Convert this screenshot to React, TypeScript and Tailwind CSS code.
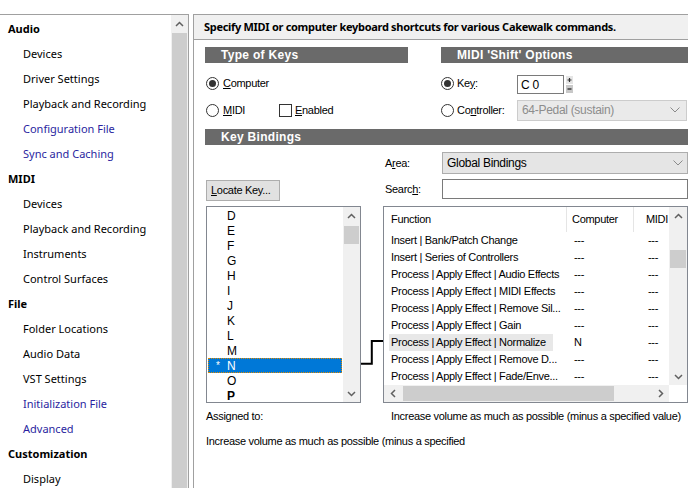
import React from "react";

const sideItems: [string, string?][] = [
  ["Audio", "h"],
  ["Devices"],
  ["Driver Settings"],
  ["Playback and Recording"],
  ["Configuration File", "b"],
  ["Sync and Caching", "b"],
  ["MIDI", "h"],
  ["Devices"],
  ["Playback and Recording"],
  ["Instruments"],
  ["Control Surfaces"],
  ["File", "h"],
  ["Folder Locations"],
  ["Audio Data"],
  ["VST Settings"],
  ["Initialization File", "b"],
  ["Advanced", "b"],
  ["Customization", "h"],
  ["Display"],
];

const keys = ["D", "E", "F", "G", "H", "I", "J", "K", "L", "M", "N", "O", "P"];

const funcs: [string, string][] = [
  ["Insert | Bank/Patch Change", "---"],
  ["Insert | Series of Controllers", "---"],
  ["Process | Apply Effect | Audio Effects", "---"],
  ["Process | Apply Effect | MIDI Effects", "---"],
  ["Process | Apply Effect | Remove Sil...", "---"],
  ["Process | Apply Effect | Gain", "---"],
  ["Process | Apply Effect | Normalize", "N"],
  ["Process | Apply Effect | Remove D...", "---"],
  ["Process | Apply Effect | Fade/Enve...", "---"],
];

function Up() {
  return (
    <svg width="9" height="6" viewBox="0 0 9 6">
      <polyline points="1,5 4.5,1.5 8,5" fill="none" stroke="#606060" strokeWidth="1.5" />
    </svg>
  );
}
function Down() {
  return (
    <svg width="9" height="6" viewBox="0 0 9 6">
      <polyline points="1,1 4.5,4.5 8,1" fill="none" stroke="#606060" strokeWidth="1.5" />
    </svg>
  );
}
function Left() {
  return (
    <svg width="6" height="9" viewBox="0 0 6 9">
      <polyline points="5,1 1.5,4.5 5,8" fill="none" stroke="#606060" strokeWidth="1.5" />
    </svg>
  );
}
function Right() {
  return (
    <svg width="6" height="9" viewBox="0 0 6 9">
      <polyline points="1,1 4.5,4.5 1,8" fill="none" stroke="#606060" strokeWidth="1.5" />
    </svg>
  );
}
function SelChevron() {
  return (
    <svg width="10" height="6" viewBox="0 0 10 6">
      <polyline points="0.5,0.5 5,5 9.5,0.5" fill="none" stroke="#8a8a8a" strokeWidth="1" />
    </svg>
  );
}

function Radio({ on }: { on?: boolean }) {
  return (
    <div className="w-[13px] h-[13px] rounded-full border border-[#333333] bg-white flex items-center justify-center shrink-0">
      {on && <div className="w-[7px] h-[7px] rounded-full bg-[#333333]" />}
    </div>
  );
}

function Bar({ children }: { children: React.ReactNode }) {
  return (
    <div className="h-[16px] bg-[#6a6a6a] flex items-center pl-[16px] text-[12px] font-bold text-white tracking-[0.3px] font-['Liberation_Sans',sans-serif]">
      {children}
    </div>
  );
}

export default function App() {
  return (
    <div className="w-[688px] h-[488px] overflow-hidden bg-white relative font-['Liberation_Sans',sans-serif] text-black">
      {/* title (cut off) */}
      <div className="h-[14px] overflow-hidden">
        <div className="mt-[-11px] ml-[3px] text-[12px] leading-[13px] font-['Noto_Sans',sans-serif] text-[#222]">Preferences</div>
      </div>
      <div className="flex h-[474px]">
        {/* sidebar */}
        <div className="w-[189px] border-t border-r border-[#a0a0a0] flex">
          <div className="flex-1 pt-[2px] font-['Noto_Sans',sans-serif] text-[11px]">
            {sideItems.map(([t, k], i) => (
              <div
                key={i}
                className={
                  "h-[25px] flex items-center whitespace-nowrap " +
                  (k === "h" ? "pl-[8px] font-bold text-black" : k === "b" ? "pl-[23px] text-[#2a1fa0]" : "pl-[23px] text-black")
                }
              >
                {t}
              </div>
            ))}
          </div>
          <div className="w-[17px] bg-[#f0f0f0] flex flex-col">
            <div className="h-[18px] flex items-center justify-center">
              <Up />
            </div>
            <div className="flex-1 mx-[1px] bg-[#cdcdcd]" />
          </div>
        </div>
        <div className="w-[4px]" />
        {/* right panel */}
        <div className="flex-1 border-t border-l border-[#a0a0a0] flex flex-col">
          <div className="h-[25px] shrink-0 bg-[#f0f0f0] border-b border-[#a0a0a0] flex items-center pl-[10px] font-['Noto_Sans',sans-serif] text-[11px] tracking-[-0.3px] font-bold whitespace-nowrap">
            Specify MIDI or computer keyboard shortcuts for various Cakewalk commands.
          </div>
          <div className="pl-[11px] text-[11px] tracking-[-0.3px]">
            {/* Top two groups */}
            <div className="flex mt-[7px]">
              <div className="w-[203px]">
                <Bar>Type of Keys</Bar>
                <div className="mt-[10px] h-[20px] flex items-center pl-[1px]">
                  <Radio on />
                  <span className="ml-[4px]">
                    <u>C</u>omputer
                  </span>
                </div>
                <div className="mt-[7px] h-[20px] flex items-center pl-[1px]">
                  <Radio />
                  <span className="ml-[4px] w-[56px]">
                    <u>M</u>IDI
                  </span>
                  <div className="w-[13px] h-[13px] border border-[#333333] bg-white" />
                  <span className="ml-[3px]">
                    <u>E</u>nabled
                  </span>
                </div>
              </div>
              <div className="ml-[33px] flex-1">
                <Bar>MIDI 'Shift' Options</Bar>
                <div className="mt-[10px] h-[20px] flex items-center">
                  <Radio on />
                  <span className="ml-[3px] w-[60px]">
                    Ke<u>y</u>:
                  </span>
                  <div className="mt-[3px] w-[47px] h-[19px] border border-[#7a7a7a] bg-white flex items-center pl-[3px] text-[12px]">
                    C 0
                  </div>
                  <svg width="8" height="17" viewBox="0 0 8 17" className="ml-[2px] mt-[3px]">
                    <rect x="0" y="0" width="7" height="8" fill="#e5e5e5" />
                    <rect x="0" y="9" width="7" height="8" fill="#c8c8c8" />
                    <path d="M1.5 4h4M3.5 2v4" stroke="#333" strokeWidth="1.2" />
                    <path d="M1.5 13h4" stroke="#333" strokeWidth="1.4" />
                  </svg>
                </div>
                <div className="mt-[7px] h-[20px] flex items-center">
                  <Radio />
                  <span className="ml-[3px] w-[60px]">
                    Co<u>n</u>troller:
                  </span>
                  <div className="w-[170px] h-[21px] border border-[#cccccc] bg-[#eaeaea] flex items-center justify-between pl-[4px] pr-[6px] text-[#8d8d8d] text-[12px]">
                    <span>64-Pedal (sustain)</span>
                    <SelChevron />
                  </div>
                </div>
              </div>
            </div>
            {/* Key Bindings */}
            <div className="mt-[9px]">
              <Bar>Key Bindings</Bar>
            </div>
            <div className="flex">
              {/* left col */}
              <div className="ml-[1px] w-[155px] shrink-0">
                <div className="mt-[35px] w-[74px] h-[21px] bg-[#e1e1e1] border border-[#adadad] flex items-center pl-[4px] whitespace-nowrap">
                  <u>L</u>ocate Key...
                </div>
                <div className="mt-[5px] h-[197px] border border-[#828790] flex overflow-hidden">
                  <div className="flex-1 px-[1px] pt-[1px] overflow-hidden text-[12px] tracking-normal">
                    {keys.map((k) =>
                      k === "N" ? (
                        <div
                          key={k}
                          className="h-[15px] bg-[#0078d7] text-white border border-dotted border-[#e08a00] flex items-center"
                        >
                          <span className="w-[18px] pl-[7px] text-[10px]">*</span>
                          <span>N</span>
                        </div>
                      ) : (
                        <div key={k} className={"h-[15px] flex items-center pl-[19px] " + (k === "P" ? "font-bold" : "")}>
                          {k}
                        </div>
                      )
                    )}
                  </div>
                  <div className="w-[17px] bg-[#f0f0f0] flex flex-col">
                    <div className="h-[17px] flex items-center justify-center">
                      <Up />
                    </div>
                    <div className="h-[18px] mx-[1px] mt-[2px] bg-[#cdcdcd]" />
                    <div className="flex-1" />
                    <div className="h-[17px] flex items-center justify-center">
                      <Down />
                    </div>
                  </div>
                </div>
                <div className="mt-[6px] h-[14px] flex items-center whitespace-nowrap">Assigned to:</div>
              </div>
              {/* connector */}
              <div className="w-[22px] shrink-0">
                <svg width="22" height="30" viewBox="0 0 22 30" className="mt-[194px]">
                  <path d="M0 24.7H10.8V2H22" fill="none" stroke="#000" strokeWidth="2" />
                </svg>
              </div>
              {/* right col */}
              <div className="w-[305px] shrink-0">
                <div className="mt-[7px] h-[22px] flex items-center">
                  <span className="w-[59px] pl-[2px]">
                    A<u>r</u>ea:
                  </span>
                  <div className="flex-1 h-[22px] bg-[#e5e5e5] border border-[#adadad] flex items-center justify-between pl-[4px] pr-[4px] text-[12px]">
                    <span>Global Bindings</span>
                    <SelChevron />
                  </div>
                </div>
                <div className="mt-[5px] h-[20px] flex items-center">
                  <span className="w-[59px] pl-[2px]">
                    Searc<u>h</u>:
                  </span>
                  <div className="flex-1 h-[20px] bg-white border border-[#7a7a7a]" />
                </div>
                <div className="mt-[7px] w-[305px] h-[197px] border border-[#828790] flex flex-col overflow-hidden">
                  <div className="flex flex-1 min-h-0">
                    <div className="flex-1 overflow-hidden">
                      <div className="h-[25px] flex items-stretch whitespace-nowrap">
                        <div className="w-[183px] shrink-0 flex items-center pl-[7px] border-r border-[#e5e5e5]">Function</div>
                        <div className="w-[67px] shrink-0 flex items-center pl-[5px] border-r border-[#e5e5e5]">Computer</div>
                        <div className="flex items-center pl-[12px]">MIDI</div>
                      </div>
                      {funcs.map(([f, c], i) => (
                        <div key={i} className="h-[17px] flex items-center whitespace-nowrap pl-[5px]">
                          <div className={"w-[164px] shrink-0 h-[17px] flex items-center pl-[2px] " + (c === "N" ? "bg-[#e8e8e8]" : "")}>
                            {f}
                          </div>
                          <div className="w-[95px] shrink-0 pl-[21px]">{c}</div>
                          <div>---</div>
                        </div>
                      ))}
                    </div>
                    <div className="w-[18px] bg-[#f0f0f0] flex flex-col">
                      <div className="h-[17px] flex items-center justify-center">
                        <Up />
                      </div>
                      <div className="mt-[26px] h-[18px] mx-[1px] bg-[#cdcdcd]" />
                      <div className="flex-1" />
                      <div className="h-[17px] flex items-center justify-center">
                        <Down />
                      </div>
                    </div>
                  </div>
                  <div className="h-[17px] flex shrink-0">
                    <div className="flex-1 bg-[#f0f0f0] flex items-center">
                      <div className="w-[17px] flex justify-center">
                        <Left />
                      </div>
                      <div className="ml-[2px] w-[211px] h-[15px] bg-[#cdcdcd]" />
                      <div className="flex-1" />
                      <div className="w-[17px] flex justify-center">
                        <Right />
                      </div>
                    </div>
                    <div className="w-[18px] bg-white" />
                  </div>
                </div>
                <div className="mt-[6px] h-[14px] flex items-center pl-[8px] whitespace-nowrap">
                  Increase volume as much as possible (minus a specified value)
                </div>
              </div>
            </div>
            <div className="mt-[11px] ml-[1px] h-[14px] flex items-center whitespace-nowrap">
              Increase volume as much as possible (minus a specified
            </div>
          </div>
        </div>
      </div>
    </div>
  );
}
